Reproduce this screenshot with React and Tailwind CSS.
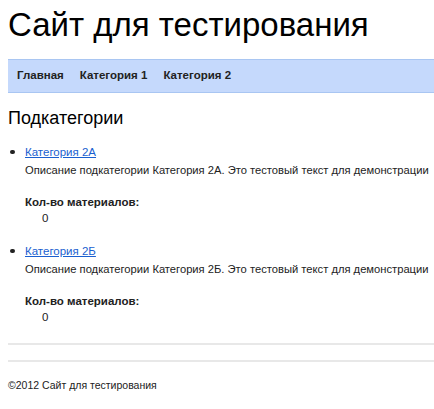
import React from 'react';

const subcategories = [
  { id: 1, title: 'Категория 2А', count: 0 },
  { id: 2, title: 'Категория 2Б', count: 0 },
];

export default function App() {
  return (
    <div className="min-h-screen overflow-hidden bg-white pl-2 text-[#222] font-['Liberation_Sans',Arial,sans-serif]">
      <h1 className="pt-[5px] text-[33px] leading-[40px] whitespace-nowrap text-black">Сайт для тестирования</h1>

      <nav className="mt-[14px] flex h-[34px] items-center gap-[16px] border-y border-[#a9c6f2] bg-[#c5d9fc] px-[9px] text-[11.5px] font-bold text-[#222]">
        <a href="#">Главная</a>
        <a href="#">Категория 1</a>
        <a href="#">Категория 2</a>
      </nav>

      <h2 className="mt-[13px] text-[18px] leading-[24px] text-black">Подкатегории</h2>

      <ul className="mt-[13px] flex flex-col gap-[16px] text-[11.5px]">
        {subcategories.map((sub) => (
          <li key={sub.id} className="flex">
            <span className="mt-[7px] ml-[2px] mr-[10px] h-[4px] w-[5px] shrink-0 rounded-full bg-[#222]" />
            <div className="min-w-0">
              <a href="#" className="block leading-[18px] text-[#1a5fd0] underline">{sub.title}</a>
              <p className="whitespace-nowrap text-[11.2px] leading-[18px]">
                Описание подкатегории {sub.title}. Это тестовый текст для демонстрации
              </p>
              <dl className="mt-[15px]">
                <dt className="font-bold leading-[16px]">Кол-во материалов:</dt>
                <dd className="ml-[17px] leading-[16px]">{sub.count}</dd>
              </dl>
            </div>
          </li>
        ))}
      </ul>

      <hr className="mt-[18px] border-t-2 border-[#e8e8e8]" />
      <hr className="mt-[15px] border-t-2 border-[#e8e8e8]" />

      <footer className="mt-[16px] text-[10.5px] leading-[14px]">©2012 Сайт для тестирования</footer>
    </div>
  );
}
